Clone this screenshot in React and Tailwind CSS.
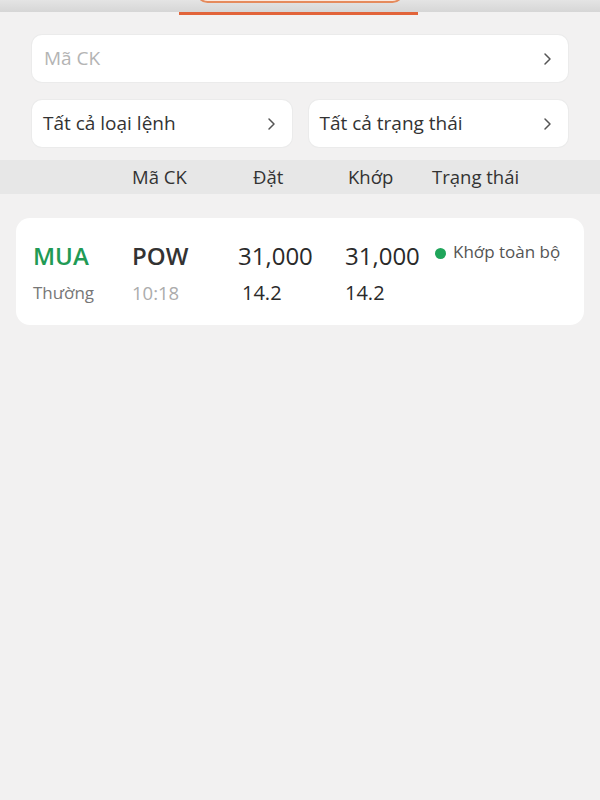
import React from "react";

const Chevron = ({ className = "" }) => (
  <svg width="9" height="14" viewBox="0 0 9 14" className={className} fill="none">
    <path d="M2 2l5 5-5 5" stroke="#555" strokeWidth="1.5" strokeLinecap="round" strokeLinejoin="round" />
  </svg>
);

export default function App() {
  return (
    <div
      className="w-[600px] h-[800px] bg-[#f2f1f1] overflow-hidden flex flex-col text-[#333]"
      style={{ fontFamily: '"Open Sans", "Noto Sans", sans-serif' }}
    >
      {/* top tab strip */}
      <div className="relative h-[12px] bg-gradient-to-b from-[#e4e4e4] to-[#d6d6d6] shrink-0">
        <div className="absolute left-[196px] top-[-20px] w-[208px] h-[23px] rounded-full border-2 border-[#e58a5c] bg-[#fbe9df]" />
      </div>
      <div className="h-[4px] shrink-0 flex">
        <div className="ml-[179px] w-[239px] h-[3px] bg-[#e2643a]" />
      </div>

      <div className="px-[32px] pt-[19px]">
        <div className="h-[47px] bg-white rounded-[10px] flex items-center justify-between pl-[12px] pr-[16px] shadow-[0_0_0_1px_#ebebeb]">
          <span className="text-[19px] text-[#b4b4b4]">Mã CK</span>
          <Chevron />
        </div>
        <div className="mt-[18px] grid grid-cols-2 gap-[17px]">
          <div className="h-[47px] bg-white rounded-[10px] flex items-center justify-between pl-[11px] pr-[16px] shadow-[0_0_0_1px_#ebebeb]">
            <span className="text-[19px] text-[#333]">Tất cả loại lệnh</span>
            <Chevron />
          </div>
          <div className="h-[47px] bg-white rounded-[10px] flex items-center justify-between pl-[11px] pr-[16px] shadow-[0_0_0_1px_#ebebeb]">
            <span className="text-[19px] text-[#333]">Tất cả trạng thái</span>
            <Chevron />
          </div>
        </div>
      </div>

      {/* table header */}
      <div className="mt-[13px] h-[34px] bg-[#e7e7e7] flex items-center text-[18.5px] text-[#333]">
        <span className="ml-[132px] w-[121px]">Mã CK</span>
        <span className="w-[95px]">Đặt</span>
        <span className="w-[84px]">Khớp</span>
        <span>Trạng thái</span>
      </div>

      {/* order card */}
      <div className="mx-[16px] mt-[24px] h-[107px] bg-white rounded-[14px] pl-[17px] pt-[20px]">
        <div className="flex items-center h-[36px]">
          <span className="w-[99px] text-[24px] font-semibold text-[#219a55]">MUA</span>
          <span className="w-[106px] text-[24px] font-semibold text-[#333]">POW</span>
          <span className="w-[107px] text-[24px] font-medium text-[#2a2a2a]">31,000</span>
          <span className="w-[90px] text-[24px] font-medium text-[#2a2a2a]">31,000</span>
          <span className="self-start mt-[1px] flex items-center">
            <span className="w-[11px] h-[11px] rounded-full bg-[#1fa55a] mt-[4px]" />
            <span className="ml-[7px] text-[17px] text-[#555]">Khớp toàn bộ</span>
          </span>
        </div>
        <div className="flex items-center h-[36px] mt-[1px]">
          <span className="w-[99px] text-[17px] text-[#777]">Thường</span>
          <span className="w-[110px] text-[18.5px] text-[#acacac]">10:18</span>
          <span className="w-[103px] text-[20px] font-medium text-[#2a2a2a]">14.2</span>
          <span className="text-[20px] font-medium text-[#2a2a2a]">14.2</span>
        </div>
      </div>
    </div>
  );
}
